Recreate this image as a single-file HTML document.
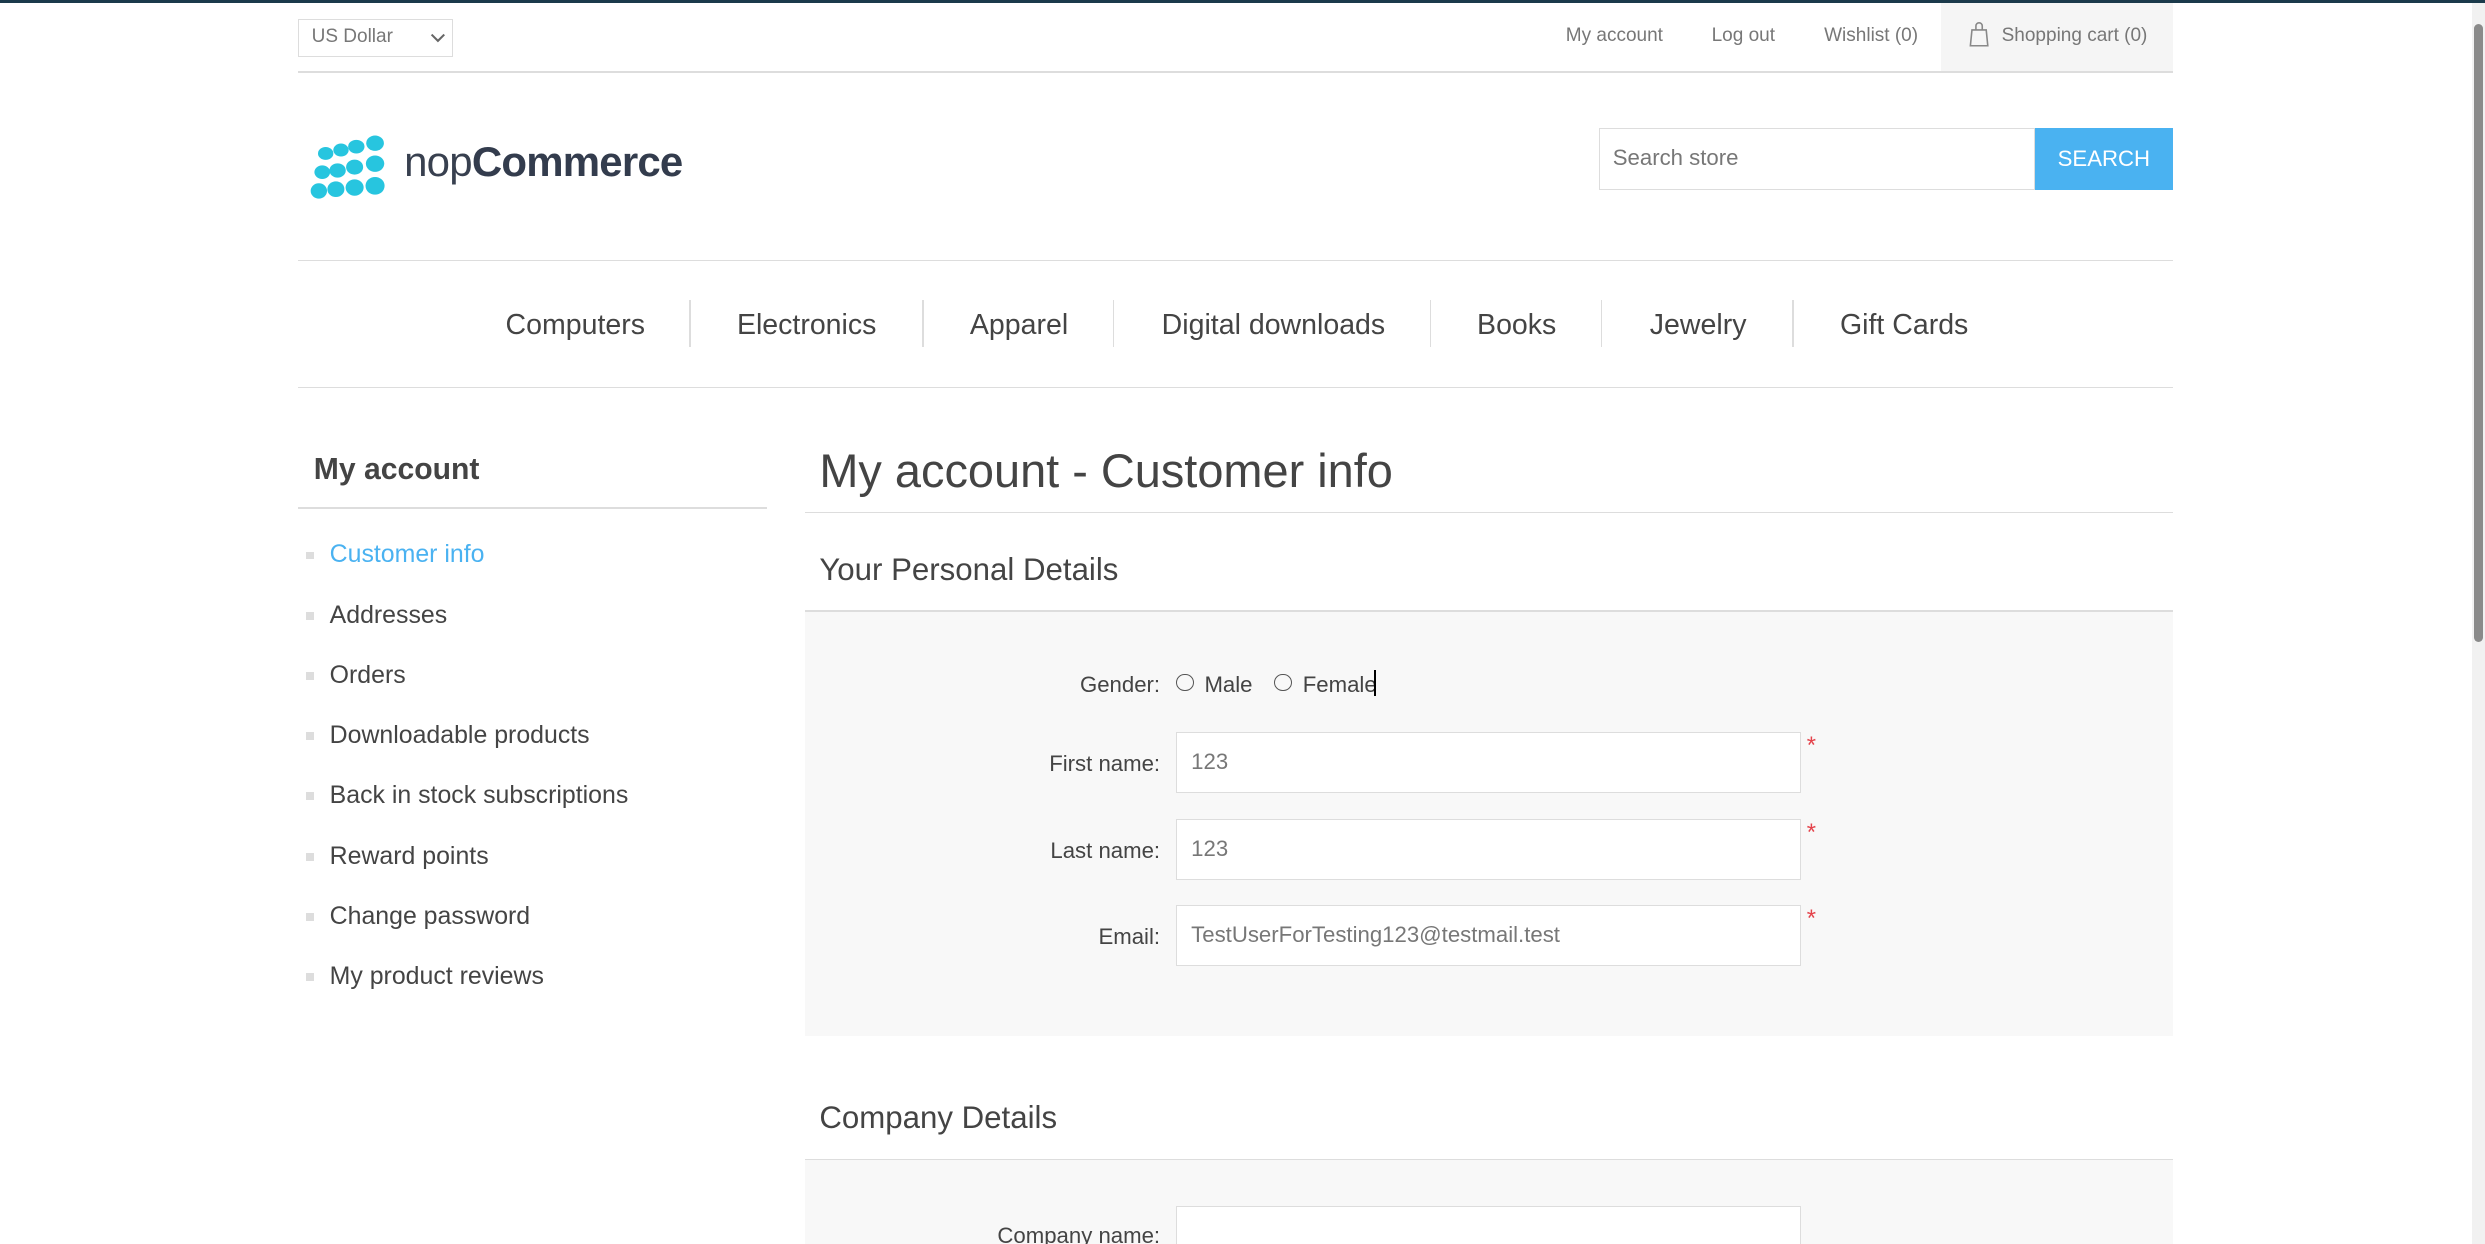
<!DOCTYPE html>
<html><head><meta charset="utf-8">
<style>
html,body{margin:0;padding:0;background:#fff;overflow:hidden}
body{width:1568px;height:785px;zoom:1.58482;position:relative;font-family:"Liberation Sans",Arial,sans-serif;color:#444}
.a{position:absolute;white-space:nowrap}
.hl{position:absolute;height:1px;background:#ddd}
.inp{position:absolute;left:742px;width:384px;height:37px;border:1px solid #ddd;background:#fff;font-size:14px;color:#777;line-height:37px;padding-left:9px;box-sizing:content-box}
.lbl{position:absolute;right:836px;font-size:14px;color:#444}
.req{position:absolute;left:1140px;color:#e4434b;font-size:15px}
.nav{position:absolute;top:195px;font-size:18px;color:#444}
.sep{position:absolute;top:189px;width:1px;height:30px;background:#ddd}
.li{position:absolute;left:208px;font-size:15.7px;color:#444}
.bl{position:absolute;left:193px;width:5px;height:5px;background:#ddd}
.tl{position:absolute;top:16px;font-size:12px;color:#777}
</style></head><body>
<div class="a" style="left:0;top:0;width:1568px;height:2px;background:#1b3a4b"></div>
<div class="a" style="left:188px;top:12px;font-size:12px;color:#777;line-height:22px;padding-left:8px;box-sizing:border-box;width:98px;height:24px;border:1px solid #ddd">US Dollar
<svg style="position:absolute;right:4px;top:8px" width="10" height="7" viewBox="0 0 10 7"><path d="M1 1l4 4 4-4" stroke="#666" stroke-width="1.3" fill="none"/></svg></div>
<div class="tl" style="left:988px">My account</div>
<div class="tl" style="left:1080px">Log out</div>
<div class="tl" style="left:1151px">Wishlist (0)</div>
<div class="a" style="left:1225px;top:2px;width:146px;height:43px;background:#f5f5f5"></div>
<svg class="a" style="left:1242px;top:14px" width="14" height="16" viewBox="0 0 14 16"><path d="M2.5 5h9l1 10h-11z M5 5V2.5a2 2 0 0 1 4 0V5" stroke="#888" stroke-width="1" fill="none"/></svg>
<div class="tl" style="left:1263px">Shopping cart (0)</div>
<div class="hl" style="left:188px;top:45px;width:1183px"></div>
<svg class="a" style="left:190px;top:84px" width="58" height="43" viewBox="0 0 45 40">
<g fill="#27c5df">
<ellipse cx="10" cy="12" rx="4.5" ry="3.8"/><ellipse cx="19" cy="10" rx="4.5" ry="3.8"/><ellipse cx="28" cy="8" rx="4.8" ry="4"/><ellipse cx="39" cy="6" rx="5.2" ry="4.5"/>
<ellipse cx="8" cy="23" rx="4.6" ry="4"/><ellipse cx="17" cy="22" rx="4.8" ry="4.2"/><ellipse cx="27" cy="20" rx="5" ry="4.4"/><ellipse cx="39" cy="18" rx="5.4" ry="4.8"/>
<ellipse cx="6" cy="34" rx="4.8" ry="4.5"/><ellipse cx="16" cy="33" rx="5" ry="4.6"/><ellipse cx="27" cy="32" rx="5.3" ry="4.8"/><ellipse cx="39" cy="31" rx="5.6" ry="5.2"/></g></svg>
<div class="a" style="left:255px;top:87px;font-size:26.5px;color:#38404f;letter-spacing:-0.5px">nop<b style="color:#333c4d">Commerce</b></div>
<div class="a" style="left:1009px;top:81px;width:275px;height:39px;border:1px solid #ddd;box-sizing:border-box;font-size:14px;color:#777;line-height:37px;padding-left:8px">Search store</div>
<div class="a" style="left:1284px;top:81px;width:87px;height:39px;background:#4ab2f1;color:#fff;font-size:14px;line-height:39px;text-align:center">SEARCH</div>
<div class="hl" style="left:188px;top:164px;width:1183px"></div>
<div class="hl" style="left:188px;top:244px;width:1183px"></div>
<div class="nav" style="left:319px">Computers</div><div class="sep" style="left:435px"></div>
<div class="nav" style="left:465px">Electronics</div><div class="sep" style="left:582px"></div>
<div class="nav" style="left:612px">Apparel</div><div class="sep" style="left:702px"></div>
<div class="nav" style="left:733px">Digital downloads</div><div class="sep" style="left:902px"></div>
<div class="nav" style="left:932px">Books</div><div class="sep" style="left:1010px"></div>
<div class="nav" style="left:1041px">Jewelry</div><div class="sep" style="left:1131px"></div>
<div class="nav" style="left:1161px">Gift Cards</div>
<div class="a" style="left:198px;top:286px;font-size:19px;font-weight:bold;color:#444">My account</div>
<div class="hl" style="left:188px;top:320px;width:296px"></div>
<div class="bl" style="top:348px"></div><div class="li" style="top:341px;color:#4ab2f1">Customer info</div>
<div class="bl" style="top:386px"></div><div class="li" style="top:379px">Addresses</div>
<div class="bl" style="top:424px"></div><div class="li" style="top:417px">Orders</div>
<div class="bl" style="top:462px"></div><div class="li" style="top:455px">Downloadable products</div>
<div class="bl" style="top:500px"></div><div class="li" style="top:493px">Back in stock subscriptions</div>
<div class="bl" style="top:538px"></div><div class="li" style="top:531px">Reward points</div>
<div class="bl" style="top:576px"></div><div class="li" style="top:569px">Change password</div>
<div class="bl" style="top:614px"></div><div class="li" style="top:607px">My product reviews</div>
<div class="a" style="left:517px;top:280px;font-size:29.6px;color:#444">My account - Customer info</div>
<div class="hl" style="left:508px;top:323px;width:863px"></div>
<div class="a" style="left:517px;top:348px;font-size:19.7px;color:#444">Your Personal Details</div>
<div class="hl" style="left:508px;top:385px;width:863px"></div>
<div class="a" style="left:508px;top:386px;width:863px;height:268px;background:#f8f8f8"></div>
<div class="lbl" style="top:424px">Gender:</div>
<div class="a" style="left:742px;top:425px;width:10px;height:10px;border:1px solid #555;border-radius:50%"></div>
<div class="a" style="left:760px;top:424px;font-size:14px">Male</div>
<div class="a" style="left:804px;top:425px;width:10px;height:10px;border:1px solid #555;border-radius:50%"></div>
<div class="a" style="left:822px;top:424px;font-size:14px">Female</div>
<div class="a" style="left:867px;top:423px;width:1px;height:16px;background:#000"></div>
<div class="lbl" style="top:474px">First name:</div><div class="inp" style="top:462px">123</div><div class="req" style="top:462px">*</div>
<div class="lbl" style="top:529px">Last name:</div><div class="inp" style="top:517px">123</div><div class="req" style="top:517px">*</div>
<div class="lbl" style="top:583px">Email:</div><div class="inp" style="top:571px">TestUserForTesting123@testmail.test</div><div class="req" style="top:571px">*</div>
<div class="a" style="left:517px;top:694px;font-size:19.7px;color:#444">Company Details</div>
<div class="hl" style="left:508px;top:731px;width:863px"></div>
<div class="a" style="left:508px;top:732px;width:863px;height:60px;background:#f8f8f8"></div>
<div class="lbl" style="top:772px">Company name:</div><div class="inp" style="top:761px"></div>
<div class="a" style="left:1560px;top:2px;width:8px;height:783px;background:#f1f1f1"></div>
<div class="a" style="left:1561px;top:15px;width:6px;height:390px;background:#8a8a8a;border-radius:3px"></div>
</body></html>
